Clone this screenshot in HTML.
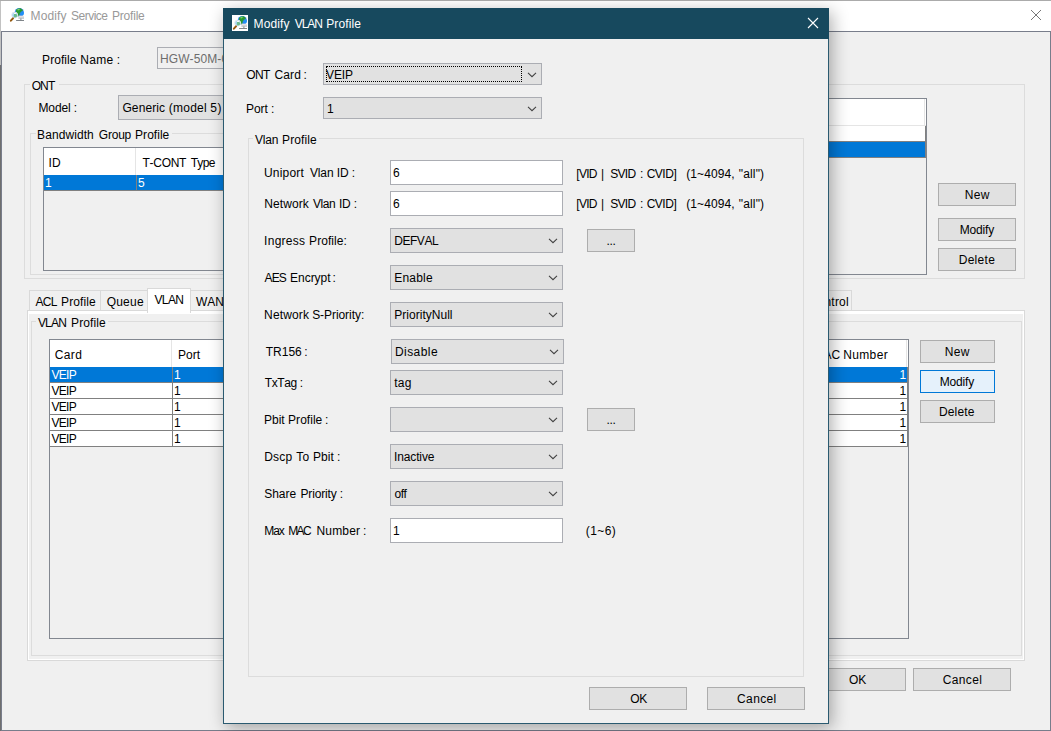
<!DOCTYPE html>
<html><head><meta charset="utf-8"><title>Modify VLAN Profile</title>
<style>
html,body{margin:0;padding:0}
body{width:1051px;height:731px;position:relative;overflow:hidden;background:#f0f0f0;font:12px "Liberation Sans",sans-serif;color:#000}
.a{position:absolute;box-sizing:border-box}
.t,.btn{font-kerning:none;font-variant-ligatures:none}
.t{position:absolute;white-space:pre;line-height:14px;height:14px}
.btn{position:absolute;box-sizing:border-box;background:#e1e1e1;border:1px solid #adadad;text-align:center;line-height:14px}
.cb{position:absolute;box-sizing:border-box;background:#e1e1e1;border:1px solid #abadb3}
.tb{position:absolute;box-sizing:border-box;background:#fff;border:1px solid #abadb3}
.gb{position:absolute;box-sizing:border-box;border:1px solid #dcdcdc}
.gl{position:absolute;background:#f0f0f0;height:3px}
.w{color:#fff}
</style></head>
<body>
<div class="a" style="left:0px;top:0px;width:1051px;height:1px;background:#ababab"></div>
<div class="a" style="left:1px;top:1px;width:1050px;height:30px;background:#fff"></div>
<div class="a" style="left:0px;top:1px;width:1px;height:64px;background:#c2c2c2"></div>
<div class="a" style="left:0px;top:65px;width:1px;height:666px;background:#6f6f6f"></div>
<div class="a" style="left:1px;top:31px;width:1050px;height:1px;background:#787d8b"></div>
<div class="a" style="left:1px;top:31px;width:1px;height:700px;background:#787d8b"></div>
<div class="a" style="left:1050px;top:31px;width:1px;height:700px;background:#787d8b"></div>
<div class="a" style="left:1px;top:730px;width:1050px;height:1px;background:#787d8b"></div>
<svg class="a" style="left:9px;top:7px" width="16" height="16" viewBox="0 0 16 16">

<g transform="translate(0,0.6)"><circle cx="10.3" cy="4.9" r="4.6" fill="#2b86ea"/>
<path d="M7.0 2.4 Q8.6 0.5 11.4 0.7 Q13.6 1.6 13.9 3.2 Q12.4 3.6 11.6 4.6 Q10.6 5.4 10.6 6.6 Q10.4 8.4 9.4 9.4 Q8.8 7.4 8.0 6.2 Q6.6 4.6 7.0 2.4Z" fill="#2a9a30"/>
<path d="M8.2 1.8 Q9.6 1.0 11 1.4 Q10.4 2.6 9.2 3.0 Q8.4 2.8 8.2 1.8Z" fill="#7fd46e"/>
<path d="M12.2 4.6 Q14.2 4.2 14.9 5.6 Q14.6 7.6 13.2 8.2 Q11.6 7.4 12.2 4.6Z" fill="#1f90f8"/></g>
<path d="M9.4 8.8 h5.6 v2.7 h-5.6z" fill="#d3d6da"/>
<path d="M9.4 8.8 h5.6 v0.9 h-5.6z" fill="#ece6e6"/>
<path d="M9.4 10.9 h5.6 v0.6 h-5.6z" fill="#aeb3b8"/>
<path d="M7.1 13.5 h7.9" stroke="#5e646b" stroke-width=".8"/>
<path d="M11.9 11.5 v1.8" stroke="#7a8088" stroke-width="1"/>
<circle cx="5.7" cy="8.1" r="3.0" fill="#a9d6f2" stroke="#e6eaee" stroke-width=".9"/>
<path d="M5.2 6.4 Q8.2 6.6 8.2 9.0 Q7.4 10.8 5.4 10.6 Q4.4 8.6 5.2 6.4Z" fill="#6dbb8c"/>
<path d="M4.9 6.5 h2.2" stroke="#fff" stroke-width=".9"/>
<path d="M4.0 10.6 L3.4 11.3" stroke="#b8bcc0" stroke-width="1"/>
<path d="M4.0 11.4 L1.9 13.7" stroke="#94590e" stroke-width="2" stroke-linecap="round"/>
</svg>
<span class="t" style="left:30.59px;top:9px;letter-spacing:0.111px;color:#999;">Modify</span>
<span class="t" style="left:71.02px;top:9px;letter-spacing:-0.512px;color:#999;">Service</span>
<span class="t" style="left:112.03px;top:9px;letter-spacing:-0.212px;color:#999;">Profile</span>
<svg class="a" style="left:1029px;top:8px" width="14" height="14" viewBox="0 0 14 14"><path d="M2 2 L12 12 M12 2 L2 12" stroke="#777" stroke-width="1" fill="none"/></svg>
<span class="t" style="left:42.09px;top:53px;letter-spacing:0.053px;">Profile</span>
<span class="t" style="left:80.27px;top:53px;letter-spacing:0.334px;">Name</span>
<span class="t" style="left:116.69px;top:53px;letter-spacing:-0.334px;">:</span>
<div class="a" style="left:157px;top:47px;width:200px;height:22px;background:#f0f0f0;border:1px solid #abadb3"></div>
<span class="t" style="left:160px;top:52px;letter-spacing:0.099px;color:#6d6d6d">HGW-50M-01</span>
<div class="gb" style="left:24px;top:84px;width:1001px;height:195px;"></div>
<div class="gl" style="left:30px;top:83px;width:29px"></div>
<span class="t" style="left:31.65px;top:79px;letter-spacing:-0.866px;">ONT</span>
<span class="t" style="left:38.46px;top:101px;letter-spacing:-0.112px;">Model</span>
<span class="t" style="left:73.76px;top:101px;letter-spacing:-0.334px;">:</span>
<div class="cb" style="left:118px;top:95px;width:300px;height:25px;"></div>
<svg class="a" style="left:402px;top:104.0px" width="12" height="9" viewBox="0 0 12 9"><path d="M2 1.8 L6 5.7 L10 1.8" fill="none" stroke="#404040" stroke-width="1.05"/></svg>
<span class="t" style="left:122.45px;top:101px;letter-spacing:0.093px;">Generic</span>
<span class="t" style="left:168.87px;top:101px;letter-spacing:0.216px;">(model</span>
<span class="t" style="left:210.27px;top:101px;letter-spacing:0.457px;">5)</span>
<div class="gb" style="left:30px;top:133px;width:885px;height:142px;"></div>
<div class="gl" style="left:36px;top:132px;width:136px"></div>
<span class="t" style="left:37.11px;top:128px;letter-spacing:0.074px;">Bandwidth</span>
<span class="t" style="left:98.86px;top:128px;letter-spacing:-0.241px;">Group</span>
<span class="t" style="left:135.09px;top:128px;letter-spacing:0.03px;">Profile</span>
<div class="a" style="left:43px;top:147px;width:700px;height:124px;border:1px solid #828790;background:#f0f0f0"></div>
<div class="a" style="left:44px;top:148px;width:698px;height:27px;background:#fff"></div>
<div class="a" style="left:135px;top:148px;width:1px;height:27px;background:#e5e5e5"></div>
<span class="t" style="left:48.6px;top:156px;">ID</span>
<span class="t" style="left:142.55px;top:156px;letter-spacing:-0.297px;">T-CONT</span>
<span class="t" style="left:190.73px;top:156px;letter-spacing:-0.696px;">Type</span>
<div class="a" style="left:44px;top:175px;width:698px;height:15px;background:#0078d7"></div>
<div class="a" style="left:136px;top:175px;width:1px;height:16px;background:#808080"></div>
<div class="a" style="left:44px;top:190px;width:698px;height:1px;background:#808080"></div>
<span class="t w" style="left:45px;top:176px;letter-spacing:0.326px;">1</span>
<span class="t w" style="left:138px;top:176px;letter-spacing:0.326px;">5</span>
<div class="a" style="left:760px;top:98px;width:167px;height:177px;border:1px solid #828790;background:#f0f0f0"></div>
<div class="a" style="left:761px;top:99px;width:165px;height:26px;background:#fff"></div>
<div class="a" style="left:761px;top:125px;width:165px;height:1px;background:#e5e5e5"></div>
<div class="a" style="left:924px;top:99px;width:1px;height:26px;background:#e5e5e5"></div>
<div class="a" style="left:761px;top:126px;width:164px;height:15px;background:#fff"></div>
<div class="a" style="left:761px;top:141px;width:164px;height:1px;background:#808080"></div>
<div class="a" style="left:761px;top:142px;width:164px;height:15px;background:#0078d7"></div>
<div class="a" style="left:761px;top:157px;width:164px;height:1px;background:#808080"></div>
<div class="a" style="left:925px;top:126px;width:1px;height:32px;background:#808080"></div>
<div class="btn" style="left:938px;top:183px;width:78px;height:23px;"></div>
<span class="t" style="left:964.67px;top:188px;letter-spacing:0.377px;">New</span>
<div class="btn" style="left:938px;top:218px;width:78px;height:23px;"></div>
<span class="t" style="left:959.67px;top:223px;letter-spacing:-0.167px;">Modify</span>
<div class="btn" style="left:938px;top:248px;width:78px;height:23px;"></div>
<span class="t" style="left:958.67px;top:253px;letter-spacing:0.313px;">Delete</span>
<div class="a" style="left:27px;top:310px;width:998px;height:351px;border:1px solid #d9d9d9;background:#f0f0f0"></div>
<div class="a" style="left:28px;top:311px;width:996px;height:3px;background:#fff"></div>
<div class="a" style="left:28px;top:311px;width:1px;height:349px;background:#fff"></div>
<div class="a" style="left:28px;top:659px;width:996px;height:1px;background:#fff"></div>
<div class="a" style="left:1023px;top:311px;width:1px;height:349px;background:#fff"></div>
<div class="a" style="left:29px;top:290px;width:72px;height:20px;border:1px solid #d9d9d9;border-bottom:none;background:#f0f0f0"></div>
<span class="t" style="left:35.46px;top:295px;letter-spacing:-0.69px;">ACL</span>
<span class="t" style="left:61.1px;top:295px;letter-spacing:0.088px;">Profile</span>
<div class="a" style="left:100px;top:290px;width:49px;height:20px;border:1px solid #d9d9d9;border-bottom:none;background:#f0f0f0"></div>
<span class="t" style="left:106.65px;top:295px;letter-spacing:0.23px;">Queue</span>
<div class="a" style="left:190px;top:290px;width:41px;height:20px;border:1px solid #d9d9d9;border-bottom:none;background:#f0f0f0"></div>
<span class="t" style="left:196px;top:295px;letter-spacing:0.001px;">WAN</span>
<div class="a" style="left:800px;top:290px;width:52px;height:20px;border:1px solid #d9d9d9;border-bottom:none;background:#f0f0f0"></div>
<span class="t" style="left:808.8px;top:295px;letter-spacing:0.188px;">Control</span>
<div class="a" style="left:147px;top:288px;width:44px;height:25px;border:1px solid #d9d9d9;border-bottom:none;background:#fff"></div>
<span class="t" style="left:154.45px;top:293px;letter-spacing:-0.6px;">VLAN</span>
<div class="gb" style="left:31px;top:321px;width:991px;height:335px;"></div>
<div class="gl" style="left:36px;top:320px;width:72px"></div>
<span class="t" style="left:37.88px;top:316px;letter-spacing:-0.757px;">VLAN</span>
<span class="t" style="left:71.1px;top:316px;letter-spacing:0.088px;">Profile</span>
<div class="a" style="left:49px;top:339px;width:860px;height:300px;border:1px solid #828790;background:#f0f0f0"></div>
<div class="a" style="left:50px;top:340px;width:858px;height:27px;background:#fff"></div>
<div class="a" style="left:171px;top:340px;width:1px;height:27px;background:#e5e5e5"></div>
<div class="a" style="left:906px;top:340px;width:1px;height:27px;background:#e5e5e5"></div>
<span class="t" style="left:54.82px;top:348px;letter-spacing:0.345px;">Card</span>
<span class="t" style="left:178px;top:348px;letter-spacing:-0.002px;">Port</span>
<span class="t" style="left:787.5px;top:348px;">Max MAC </span>
<span class="t" style="left:843.22px;top:348px;letter-spacing:0.355px;">Number</span>
<div class="a" style="left:50px;top:367px;width:857px;height:15px;background:#0078d7"></div>
<div class="a" style="left:50px;top:382px;width:858px;height:1px;background:#808080"></div>
<span class="t w" style="left:51.45px;top:368px;letter-spacing:-0.704px;">VEIP</span>
<span class="t w" style="left:174px;top:368px;letter-spacing:0.326px;">1</span>
<span class="t w" style="left:899.5px;top:368px;letter-spacing:0.326px;">1</span>
<div class="a" style="left:50px;top:383px;width:857px;height:15px;background:#fff"></div>
<div class="a" style="left:50px;top:398px;width:858px;height:1px;background:#808080"></div>
<span class="t" style="left:51.45px;top:384px;letter-spacing:-0.704px;">VEIP</span>
<span class="t" style="left:174px;top:384px;letter-spacing:0.326px;">1</span>
<span class="t" style="left:899.5px;top:384px;letter-spacing:0.326px;">1</span>
<div class="a" style="left:50px;top:399px;width:857px;height:15px;background:#fff"></div>
<div class="a" style="left:50px;top:414px;width:858px;height:1px;background:#808080"></div>
<span class="t" style="left:51.45px;top:400px;letter-spacing:-0.704px;">VEIP</span>
<span class="t" style="left:174px;top:400px;letter-spacing:0.326px;">1</span>
<span class="t" style="left:899.5px;top:400px;letter-spacing:0.326px;">1</span>
<div class="a" style="left:50px;top:415px;width:857px;height:15px;background:#fff"></div>
<div class="a" style="left:50px;top:430px;width:858px;height:1px;background:#808080"></div>
<span class="t" style="left:51.45px;top:416px;letter-spacing:-0.704px;">VEIP</span>
<span class="t" style="left:174px;top:416px;letter-spacing:0.326px;">1</span>
<span class="t" style="left:899.5px;top:416px;letter-spacing:0.326px;">1</span>
<div class="a" style="left:50px;top:431px;width:857px;height:15px;background:#fff"></div>
<div class="a" style="left:50px;top:446px;width:858px;height:1px;background:#808080"></div>
<span class="t" style="left:51.45px;top:432px;letter-spacing:-0.704px;">VEIP</span>
<span class="t" style="left:174px;top:432px;letter-spacing:0.326px;">1</span>
<span class="t" style="left:899.5px;top:432px;letter-spacing:0.326px;">1</span>
<div class="a" style="left:172px;top:367px;width:1px;height:80px;background:#808080"></div>
<div class="a" style="left:907px;top:367px;width:1px;height:80px;background:#808080"></div>
<div class="btn" style="left:920px;top:340px;width:75px;height:23px;"></div>
<span class="t" style="left:944.67px;top:345px;letter-spacing:0.377px;">New</span>
<div class="btn" style="left:920px;top:370px;width:75px;height:23px;background:#e5f1fb;border-color:#0078d7;"></div>
<span class="t" style="left:939.67px;top:375px;letter-spacing:-0.167px;">Modify</span>
<div class="btn" style="left:920px;top:400px;width:75px;height:23px;"></div>
<span class="t" style="left:938.92px;top:405px;letter-spacing:0.179px;">Delete</span>
<div class="btn" style="left:808px;top:668px;width:98px;height:23px;"></div>
<span class="t" style="left:848.97px;top:673px;letter-spacing:-0.092px;">OK</span>
<div class="btn" style="left:913px;top:668px;width:98px;height:23px;"></div>
<span class="t" style="left:942.82px;top:673px;letter-spacing:0.338px;">Cancel</span>
<div class="a" style="left:223px;top:8px;width:606px;height:716px;background:#f0f0f0;border:1px solid #2a5a70;box-shadow:2.5px 3.5px 16px 0px rgba(0,0,0,.32)"></div>
<div class="a" style="left:223px;top:8px;width:606px;height:31px;background:#17495e"></div>
<svg class="a" style="left:232px;top:15px" width="16" height="16" viewBox="0 0 16 16">
<rect width="16" height="16" fill="#fff"/>
<g transform="translate(0,0.6)"><circle cx="10.3" cy="4.9" r="4.6" fill="#2b86ea"/>
<path d="M7.0 2.4 Q8.6 0.5 11.4 0.7 Q13.6 1.6 13.9 3.2 Q12.4 3.6 11.6 4.6 Q10.6 5.4 10.6 6.6 Q10.4 8.4 9.4 9.4 Q8.8 7.4 8.0 6.2 Q6.6 4.6 7.0 2.4Z" fill="#2a9a30"/>
<path d="M8.2 1.8 Q9.6 1.0 11 1.4 Q10.4 2.6 9.2 3.0 Q8.4 2.8 8.2 1.8Z" fill="#7fd46e"/>
<path d="M12.2 4.6 Q14.2 4.2 14.9 5.6 Q14.6 7.6 13.2 8.2 Q11.6 7.4 12.2 4.6Z" fill="#1f90f8"/></g>
<path d="M9.4 8.8 h5.6 v2.7 h-5.6z" fill="#d3d6da"/>
<path d="M9.4 8.8 h5.6 v0.9 h-5.6z" fill="#ece6e6"/>
<path d="M9.4 10.9 h5.6 v0.6 h-5.6z" fill="#aeb3b8"/>
<path d="M7.1 13.5 h7.9" stroke="#5e646b" stroke-width=".8"/>
<path d="M11.9 11.5 v1.8" stroke="#7a8088" stroke-width="1"/>
<circle cx="5.7" cy="8.1" r="3.0" fill="#a9d6f2" stroke="#e6eaee" stroke-width=".9"/>
<path d="M5.2 6.4 Q8.2 6.6 8.2 9.0 Q7.4 10.8 5.4 10.6 Q4.4 8.6 5.2 6.4Z" fill="#6dbb8c"/>
<path d="M4.9 6.5 h2.2" stroke="#fff" stroke-width=".9"/>
<path d="M4.0 10.6 L3.4 11.3" stroke="#b8bcc0" stroke-width="1"/>
<path d="M4.0 11.4 L1.9 13.7" stroke="#94590e" stroke-width="2" stroke-linecap="round"/>
</svg>
<span class="t" style="left:253.59px;top:17px;letter-spacing:0.11px;color:#fff">Modify</span>
<span class="t" style="left:294.78px;top:17px;letter-spacing:-1.093px;color:#fff">VLAN</span>
<span class="t" style="left:326.2px;top:17px;letter-spacing:0.136px;color:#fff">Profile</span>
<svg class="a" style="left:806px;top:16px" width="14" height="14" viewBox="0 0 14 14"><path d="M2 2 L12 12 M12 2 L2 12" stroke="#fff" stroke-width="1.1" fill="none"/></svg>
<span class="t" style="left:246.35px;top:68px;letter-spacing:-0.66px;">ONT</span>
<span class="t" style="left:274.47px;top:68px;letter-spacing:0.141px;">Card</span>
<span class="t" style="left:303.51px;top:68px;letter-spacing:-0.334px;">:</span>
<div class="cb" style="left:323px;top:63px;width:219px;height:22px;"></div>
<svg class="a" style="left:526px;top:71.0px" width="12" height="9" viewBox="0 0 12 9"><path d="M2 1.8 L6 5.7 L10 1.8" fill="none" stroke="#404040" stroke-width="1.05"/></svg>
<span class="t" style="left:326px;top:68px;letter-spacing:-0.086px;">VEIP</span>
<div class="a" style="left:326px;top:66px;width:196px;height:16px;border:1px dotted #000"></div>
<span class="t" style="left:246.1px;top:102px;letter-spacing:-0.124px;">Port</span>
<span class="t" style="left:271.12px;top:102px;letter-spacing:-0.334px;">:</span>
<div class="cb" style="left:323px;top:97px;width:219px;height:22px;"></div>
<svg class="a" style="left:526px;top:105.0px" width="12" height="9" viewBox="0 0 12 9"><path d="M2 1.8 L6 5.7 L10 1.8" fill="none" stroke="#404040" stroke-width="1.05"/></svg>
<span class="t" style="left:327px;top:102px;letter-spacing:0.326px;">1</span>
<div class="gb" style="left:248px;top:138px;width:556px;height:539px;"></div>
<div class="gl" style="left:253px;top:137px;width:66px"></div>
<span class="t" style="left:254.88px;top:133px;letter-spacing:-0.12px;">Vlan</span>
<span class="t" style="left:282.1px;top:133px;letter-spacing:0.088px;">Profile</span>
<span class="t" style="left:264.02px;top:166px;letter-spacing:0.191px;">Uniport</span>
<span class="t" style="left:309.88px;top:166px;letter-spacing:-0.108px;">Vlan ID</span>
<span class="t" style="left:351.69px;top:166px;letter-spacing:-0.334px;">:</span>
<div class="tb" style="left:390px;top:160px;width:173px;height:25px;"></div>
<span class="t" style="left:393px;top:166px;letter-spacing:0.326px;">6</span>
<span class="t" style="left:264.27px;top:197px;letter-spacing:0.097px;">Network</span>
<span class="t" style="left:312.94px;top:197px;letter-spacing:-0.398px;">Vlan</span>
<span class="t" style="left:339.09px;top:197px;letter-spacing:-0.524px;">ID</span>
<span class="t" style="left:353.69px;top:197px;letter-spacing:-0.334px;">:</span>
<div class="tb" style="left:390px;top:191px;width:173px;height:25px;"></div>
<span class="t" style="left:393px;top:197px;letter-spacing:0.326px;">6</span>
<span class="t" style="left:264.11px;top:234px;letter-spacing:0.258px;">Ingress</span>
<span class="t" style="left:309.09px;top:234px;letter-spacing:0.071px;">Profile:</span>
<div class="cb" style="left:390px;top:228px;width:173px;height:25px;"></div>
<svg class="a" style="left:547px;top:237.0px" width="12" height="9" viewBox="0 0 12 9"><path d="M2 1.8 L6 5.7 L10 1.8" fill="none" stroke="#404040" stroke-width="1.05"/></svg>
<span class="t" style="left:394.22px;top:234px;letter-spacing:-0.449px;">DEFVAL</span>
<span class="t" style="left:264.46px;top:271px;letter-spacing:-0.832px;">AES</span>
<span class="t" style="left:290.09px;top:271px;letter-spacing:-0.042px;">Encrypt</span>
<span class="t" style="left:332.54px;top:271px;letter-spacing:-0.334px;">:</span>
<div class="cb" style="left:390px;top:265px;width:173px;height:25px;"></div>
<svg class="a" style="left:547px;top:274.0px" width="12" height="9" viewBox="0 0 12 9"><path d="M2 1.8 L6 5.7 L10 1.8" fill="none" stroke="#404040" stroke-width="1.05"/></svg>
<span class="t" style="left:394.22px;top:271px;letter-spacing:0.198px;">Enable</span>
<span class="t" style="left:264.09px;top:308px;letter-spacing:0.141px;">Network</span>
<span class="t" style="left:312.14px;top:308px;letter-spacing:-0.057px;">S-Priority:</span>
<div class="cb" style="left:390px;top:302px;width:173px;height:25px;"></div>
<svg class="a" style="left:547px;top:311.0px" width="12" height="9" viewBox="0 0 12 9"><path d="M2 1.8 L6 5.7 L10 1.8" fill="none" stroke="#404040" stroke-width="1.05"/></svg>
<span class="t" style="left:394.22px;top:308px;letter-spacing:0.027px;">PriorityNull</span>
<span class="t" style="left:265.73px;top:345px;letter-spacing:-0.001px;">TR156</span>
<span class="t" style="left:304.33px;top:345px;letter-spacing:-0.334px;">:</span>
<div class="cb" style="left:391px;top:339px;width:173px;height:25px;"></div>
<svg class="a" style="left:548px;top:348.0px" width="12" height="9" viewBox="0 0 12 9"><path d="M2 1.8 L6 5.7 L10 1.8" fill="none" stroke="#404040" stroke-width="1.05"/></svg>
<span class="t" style="left:394.92px;top:345px;letter-spacing:0.456px;">Disable</span>
<span class="t" style="left:264.74px;top:376px;letter-spacing:-0.362px;">TxTag</span>
<span class="t" style="left:299.69px;top:376px;letter-spacing:-0.334px;">:</span>
<div class="cb" style="left:390px;top:370px;width:173px;height:25px;"></div>
<svg class="a" style="left:547px;top:379.0px" width="12" height="9" viewBox="0 0 12 9"><path d="M2 1.8 L6 5.7 L10 1.8" fill="none" stroke="#404040" stroke-width="1.05"/></svg>
<span class="t" style="left:394.2px;top:376px;letter-spacing:0.269px;">tag</span>
<span class="t" style="left:264.09px;top:413px;letter-spacing:-0.031px;">Pbit</span>
<span class="t" style="left:288.09px;top:413px;letter-spacing:0.03px;">Profile</span>
<span class="t" style="left:324.91px;top:413px;letter-spacing:-0.334px;">:</span>
<div class="cb" style="left:390px;top:407px;width:173px;height:25px;"></div>
<svg class="a" style="left:547px;top:416.0px" width="12" height="9" viewBox="0 0 12 9"><path d="M2 1.8 L6 5.7 L10 1.8" fill="none" stroke="#404040" stroke-width="1.05"/></svg>
<span class="t" style="left:264.27px;top:450px;letter-spacing:0.152px;">Dscp</span>
<span class="t" style="left:296.2px;top:450px;letter-spacing:-1.141px;">To</span>
<span class="t" style="left:313.11px;top:450px;letter-spacing:-0.013px;">Pbit</span>
<span class="t" style="left:337.12px;top:450px;letter-spacing:-0.334px;">:</span>
<div class="cb" style="left:390px;top:444px;width:173px;height:25px;"></div>
<svg class="a" style="left:547px;top:453.0px" width="12" height="9" viewBox="0 0 12 9"><path d="M2 1.8 L6 5.7 L10 1.8" fill="none" stroke="#404040" stroke-width="1.05"/></svg>
<span class="t" style="left:393.97px;top:450px;letter-spacing:-0.128px;">Inactive</span>
<span class="t" style="left:264.16px;top:487px;letter-spacing:-0.013px;">Share</span>
<span class="t" style="left:300.49px;top:487px;letter-spacing:-0.157px;">Priority</span>
<span class="t" style="left:339.72px;top:487px;letter-spacing:-0.334px;">:</span>
<div class="cb" style="left:390px;top:481px;width:173px;height:25px;"></div>
<svg class="a" style="left:547px;top:490.0px" width="12" height="9" viewBox="0 0 12 9"><path d="M2 1.8 L6 5.7 L10 1.8" fill="none" stroke="#404040" stroke-width="1.05"/></svg>
<span class="t" style="left:394.54px;top:487px;letter-spacing:-0.55px;">off</span>
<span class="t" style="left:264.27px;top:524px;letter-spacing:-1.087px;">Max</span>
<span class="t" style="left:288.27px;top:524px;letter-spacing:-1.677px;">MAC</span>
<span class="t" style="left:316.46px;top:524px;letter-spacing:0.188px;">Number</span>
<span class="t" style="left:362.91px;top:524px;letter-spacing:-0.334px;">:</span>
<div class="tb" style="left:390px;top:518px;width:173px;height:25px;"></div>
<span class="t" style="left:393px;top:524px;letter-spacing:0.326px;">1</span>
<span class="t" style="left:576.36px;top:167px;letter-spacing:-0.745px;">[VID</span>
<span class="t" style="left:601.09px;top:167px;letter-spacing:-0.117px;">|</span>
<span class="t" style="left:610.16px;top:167px;letter-spacing:-0.694px;">SVID</span>
<span class="t" style="left:639.91px;top:167px;letter-spacing:-0.334px;">:</span>
<span class="t" style="left:646.66px;top:167px;letter-spacing:-0.485px;">CVID]</span>
<span class="t" style="left:686.22px;top:167px;letter-spacing:0.101px;">(1~4094,</span>
<span class="t" style="left:738.83px;top:167px;letter-spacing:0.136px;">&quot;all&quot;)</span>
<span class="t" style="left:576.36px;top:197px;letter-spacing:-0.745px;">[VID</span>
<span class="t" style="left:601.09px;top:197px;letter-spacing:-0.117px;">|</span>
<span class="t" style="left:610.16px;top:197px;letter-spacing:-0.694px;">SVID</span>
<span class="t" style="left:639.91px;top:197px;letter-spacing:-0.334px;">:</span>
<span class="t" style="left:646.66px;top:197px;letter-spacing:-0.485px;">CVID]</span>
<span class="t" style="left:686.22px;top:197px;letter-spacing:0.101px;">(1~4094,</span>
<span class="t" style="left:738.83px;top:197px;letter-spacing:0.136px;">&quot;all&quot;)</span>
<span class="t" style="left:585.87px;top:524px;letter-spacing:0.408px;">(1~6)</span>
<div class="btn" style="left:587px;top:229px;width:48px;height:23px;"></div>
<span class="t" style="left:606.5px;top:234px;letter-spacing:-0.334px;">...</span>
<div class="btn" style="left:587px;top:408px;width:48px;height:23px;"></div>
<span class="t" style="left:606.5px;top:413px;letter-spacing:-0.334px;">...</span>
<div class="btn" style="left:589px;top:687px;width:98px;height:23px;"></div>
<span class="t" style="left:630.19px;top:692px;letter-spacing:-0.207px;">OK</span>
<div class="btn" style="left:707px;top:687px;width:98px;height:23px;"></div>
<span class="t" style="left:737.09px;top:692px;letter-spacing:0.368px;">Cancel</span>
</body></html>
